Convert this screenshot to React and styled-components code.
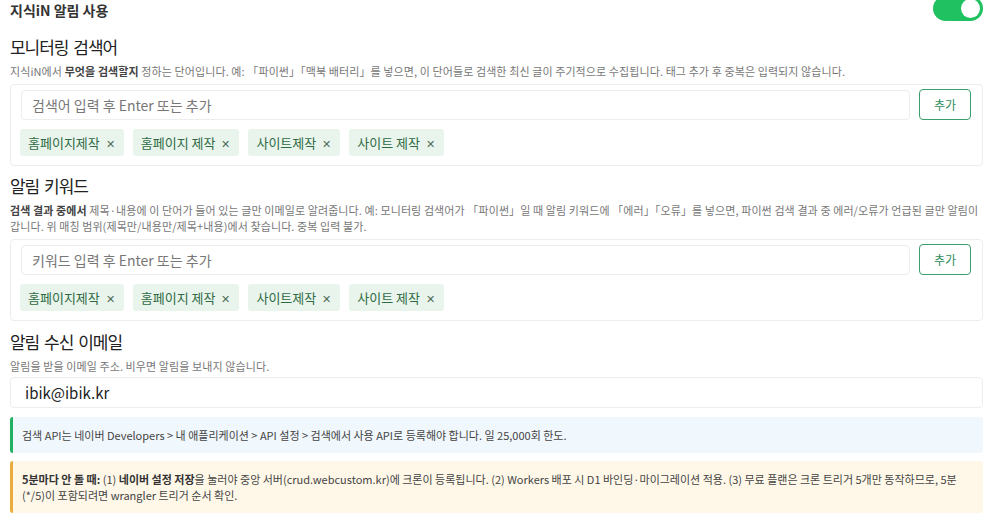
import React from "react";
import styled, { createGlobalStyle } from "styled-components";

const Global = createGlobalStyle`
  html, body { margin: 0; padding: 0; background: #fff; }
  body { font-family: "Noto Sans CJK KR", "Noto Sans", sans-serif; color: #222; }
  * { box-sizing: border-box; }
`;

const Page = styled.div`
  padding: 0 8px 0 10px;
  display: flex;
  flex-direction: column;
  width: 991px;
  height: 529px;
  overflow: hidden;
`;

const TopRow = styled.div`
  display: flex;
  align-items: center;
  justify-content: space-between;
  height: 20px;
`;

const TopLabel = styled.div`
  font-size: 14px;
  font-weight: 700;
  color: #333;
`;

const Toggle = styled.div`
  width: 50px;
  height: 25px;
  border-radius: 13px;
  background: #1fc160;
  position: relative;
  margin-top: -4px;
  &::after {
    content: "";
    position: absolute;
    right: 3px;
    top: 3px;
    width: 19px;
    height: 19px;
    border-radius: 50%;
    background: #fff;
  }
`;

const Heading = styled.h3`
  margin: ${(p) => p.$mt}px 0 0;
  font-size: 17px;
  font-weight: 400;
  color: #222;
  letter-spacing: -0.06em;
  word-spacing: 0.12em;
  line-height: 22px;
`;

const Desc = styled.p`
  margin: 5px 0 0;
  font-size: 11px;
  color: #777;
  line-height: 16px;
  letter-spacing: 0.1px;
  word-break: keep-all;
  b { color: #444; font-weight: 700; }
`;

const Card = styled.div`
  margin-top: 5px;
  border: 1px solid #ededed;
  border-radius: 4px;
  padding: 4px 10px 9px 9px;
  display: flex;
  flex-direction: column;
  gap: 9px;
`;

const InputRow = styled.div`
  display: flex;
  gap: 9px;
  align-items: center;
  padding-left: 1px;
`;

const TextInput = styled.div`
  flex: 1;
  height: 30px;
  border: 1px solid #ededed;
  border-radius: 4px;
  padding: 0 10px;
  display: flex;
  align-items: center;
  font-size: 14px;
  color: ${(p) => (p.$filled ? "#222" : "#777")};
`;

const AddButton = styled.button`
  width: 52px;
  height: 31px;
  border: 1px solid #3c9e6c;
  border-radius: 4px;
  background: #fff;
  color: #2e8b5a;
  font-family: inherit;
  font-size: 12px;
  margin-right: 1px;
  padding: 0;
`;

const Tags = styled.div`
  display: flex;
  gap: 9px;
`;

const Tag = styled.span`
  height: 27px;
  padding: 0 9px 0 8px;
  border-radius: 3px;
  background: #e9f5ec;
  color: #2f6a44;
  font-size: 13px;
  display: flex;
  align-items: center;
  gap: 6px;
`;

const Close = styled.span`
  font-size: 11px;
  color: #4c6d58;
`;

const EmailInput = styled(TextInput)`
  flex: none;
  margin-top: 3px;
  height: 31px;
  font-size: 15px;
  padding: 0 14px;
`;

const Note = styled.div`
  margin-top: ${(p) => p.$mt}px;
  border-left: 3px solid ${(p) => p.$accent};
  background: ${(p) => p.$bg};
  border-radius: 3px;
  padding: ${(p) => p.$pad};
  font-size: 11px;
  line-height: 16px;
  color: #444;
  b { font-weight: 700; color: #333; }
`;

const tags = ["홈페이지제작", "홈페이지 제작", "사이트제작", "사이트 제작"];

function TagCard({ placeholder }) {
  return (
    <Card>
      <InputRow>
        <TextInput>{placeholder}</TextInput>
        <AddButton>추가</AddButton>
      </InputRow>
      <Tags>
        {tags.map((t) => (
          <Tag key={t}>
            {t}
            <Close>✕</Close>
          </Tag>
        ))}
      </Tags>
    </Card>
  );
}

export default function App() {
  return (
    <>
      <Global />
      <Page>
        <TopRow>
          <TopLabel>지식iN 알림 사용</TopLabel>
          <Toggle />
        </TopRow>

        <Heading $mt={16}>모니터링 검색어</Heading>
        <Desc>
          지식iN에서 <b>무엇을 검색할지</b> 정하는 단어입니다. 예: 「파이썬」「맥북 배터리」를 넣으면, 이 단어들로 검색한 최신 글이 주기적으로 수집됩니다. 태그 추가 후 중복은 입력되지 않습니다.
        </Desc>
        <TagCard placeholder="검색어 입력 후 Enter 또는 추가" />

        <Heading $mt={9}>알림 키워드</Heading>
        <Desc>
          <b>검색 결과 중에서</b> 제목·내용에 이 단어가 들어 있는 글만 이메일로 알려줍니다. 예: 모니터링 검색어가 「파이썬」일 때 알림 키워드에 「에러」「오류」를 넣으면, 파이썬 검색 결과 중 에러/오류가 언급된 글만 알림이 갑니다. 위 매칭 범위(제목만/내용만/제목+내용)에서 찾습니다. 중복 입력 불가.
        </Desc>
        <TagCard placeholder="키워드 입력 후 Enter 또는 추가" />

        <Heading $mt={10}>알림 수신 이메일</Heading>
        <Desc>알림을 받을 이메일 주소. 비우면 알림을 보내지 않습니다.</Desc>
        <EmailInput $filled>ibik@ibik.kr</EmailInput>

        <Note $mt={9} $accent="#22b163" $bg="#f0f7fd" $pad="10px 12px 10px 9px">
          검색 API는 네이버 Developers &gt; 내 애플리케이션 &gt; API 설정 &gt; 검색에서 사용 API로 등록해야 합니다. 일 25,000회 한도.
        </Note>
        <Note $mt={8} $accent="#e8ad3c" $bg="#fff8e9" $pad="10px 20px 10px 9px">
          <b>5분마다 안 돌 때:</b> (1) <b>네이버 설정 저장</b>을 눌러야 중앙 서버(crud.webcustom.kr)에 크론이 등록됩니다. (2) Workers 배포 시 D1 바인딩·마이그레이션 적용. (3) 무료 플랜은 크론 트리거 5개만 동작하므로, 5분(*/5)이 포함되려면 wrangler 트리거 순서 확인.
        </Note>
      </Page>
    </>
  );
}
